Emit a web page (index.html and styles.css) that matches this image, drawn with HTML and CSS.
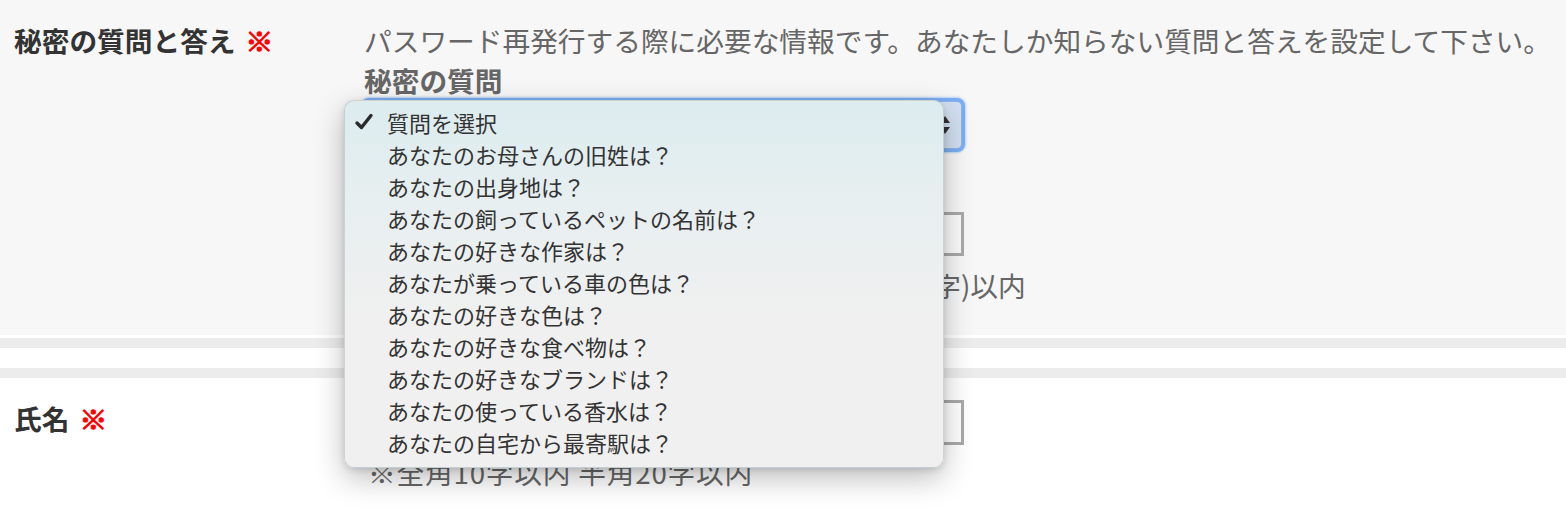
FILE: index.html
```html
<!DOCTYPE html>
<html lang="ja">
<head>
<meta charset="utf-8">
<title>秘密の質問と答え</title>
<link rel="stylesheet" href="styles.css">
</head>
<body>
<div class="form">
  <section class="row row-gray">
    <div class="label">秘密の質問と答え<span class="req">※</span></div>
    <div class="field">
      <p class="desc">パスワード再発行する際に必要な情報です。あなたしか知らない質問と答えを設定して下さい。</p>
      <p class="sub">秘密の質問</p>
      <div class="select-wrap">
        <div class="select">
          <span class="select-text">質問を選択</span>
          <svg class="arrows" width="12" height="24" viewBox="0 0 12 24"><path d="M6 3 L11 10 L1 10 Z M6 21 L11 14 L1 14 Z" fill="#333"/></svg>
        </div>
        <ul class="menu">
          <li class="item checked"><svg class="check" width="20" height="20" viewBox="0 0 20 20"><path d="M3 11 L7.5 15.5 L17 3.5" fill="none" stroke="#2b2b2b" stroke-width="3.4" stroke-linecap="round" stroke-linejoin="round"/></svg>質問を選択</li>
          <li class="item">あなたのお母さんの旧姓は？</li>
          <li class="item">あなたの出身地は？</li>
          <li class="item">あなたの飼っているペットの名前は？</li>
          <li class="item">あなたの好きな作家は？</li>
          <li class="item">あなたが乗っている車の色は？</li>
          <li class="item">あなたの好きな色は？</li>
          <li class="item">あなたの好きな食べ物は？</li>
          <li class="item">あなたの好きなブランドは？</li>
          <li class="item">あなたの使っている香水は？</li>
          <li class="item">あなたの自宅から最寄駅は？</li>
        </ul>
      </div>
      <p class="sub sub-answer">秘密の答え</p>
      <div class="input input-answer"></div>
      <p class="note note-answer">※ひらがな・カタカナ・漢字全角20字(半角40字)以内</p>
    </div>
  </section>
  <div class="divider"></div>
  <section class="row">
    <div class="label">氏名<span class="req">※</span></div>
    <div class="field">
      <div class="input input-name"></div>
      <p class="note note-name">※全角10字以内 半角20字以内</p>
    </div>
  </section>
</div>
</body>
</html>
```
FILE: styles.css
```css
* { box-sizing: border-box; }
html, body { margin: 0; padding: 0; background: #fff; }
body {
  font-family: "Noto Sans CJK JP", "Noto Sans", sans-serif;
  color: #333;
  overflow: hidden;
}
p, ul { margin: 0; padding: 0; }

.form { width: 1566px; }

.row {
  display: grid;
  grid-template-columns: 364px 1fr;
  padding: 20px 0 20px 0;
}
.row-gray {
  background: #f7f7f7;
  padding-bottom: 30px;
}

.label {
  padding-left: 14px;
  font-size: 27.7px;
  line-height: 40px;
  font-weight: bold;
  color: #333;
  white-space: nowrap;
}
.req {
  color: #f00;
  margin-left: 10px;
  font-weight: bold;
  -webkit-text-stroke: 1.2px #f00;
}

.field {
  display: flex;
  flex-direction: column;
  align-items: flex-start;
}

.desc {
  font-size: 27.7px;
  line-height: 40px;
  color: #666;
  white-space: nowrap;
}
.sub {
  font-size: 27.7px;
  line-height: 40px;
  font-weight: bold;
  color: #666;
}
.sub-answer { margin-top: 16px; }

.select-wrap {
  position: relative;
  margin-top: 1px;
  width: 598px;
  height: 48px;
}
.select {
  width: 100%;
  height: 100%;
  display: flex;
  align-items: center;
  justify-content: space-between;
  padding: 0 10px 0 16px;
  background: #d3e0f1;
  border: 1px solid #8fb4ea;
  border-radius: 5px;
  box-shadow: 0 0 0 3px #7aaef4, 0 0 2px 4px rgba(122, 174, 244, 0.5);
  font-size: 22px;
  color: #333;
}
.arrows { flex: none; }

.menu {
  position: absolute;
  left: -20px;
  top: -1px;
  width: 600px;
  height: 368px;
  list-style: none;
  padding: 5px 0 11px;
  border-radius: 10px;
  border: 1px solid rgba(0, 0, 0, 0.12);
  background: linear-gradient(to bottom, #dcecef 0%, #e8eff0 30%, #f0f0f0 60%, #f0f0f0 100%);
  box-shadow: 0 10px 30px rgba(0, 0, 0, 0.26), 0 2px 6px rgba(0, 0, 0, 0.12);
  z-index: 10;
}
.item {
  position: relative;
  height: 32px;
  line-height: 32px;
  padding-left: 42px;
  font-size: 22px;
  color: #333;
  white-space: nowrap;
}
.check {
  position: absolute;
  left: 9px;
  top: 6px;
}

.input {
  width: 600px;
  background: #fff;
  border: 3px solid #a9a9a9;
}
.input-answer {
  margin-top: 7px;
  height: 44px;
  background: #fbfbfb;
}
.input-name {
  margin-top: 2px;
  height: 45px;
}

.note {
  font-size: 27.7px;
  line-height: 40px;
  color: #666;
  white-space: nowrap;
}
.note-answer { margin-top: 9px; }
.note-name {
  margin-top: 7px;
  padding-left: 4px;
  letter-spacing: 0.8px;
}

.divider {
  margin-top: 3px;
  height: 40px;
  background: #fff;
  border-top: 10px solid #ececec;
  border-bottom: 10px solid #ececec;
}
```
